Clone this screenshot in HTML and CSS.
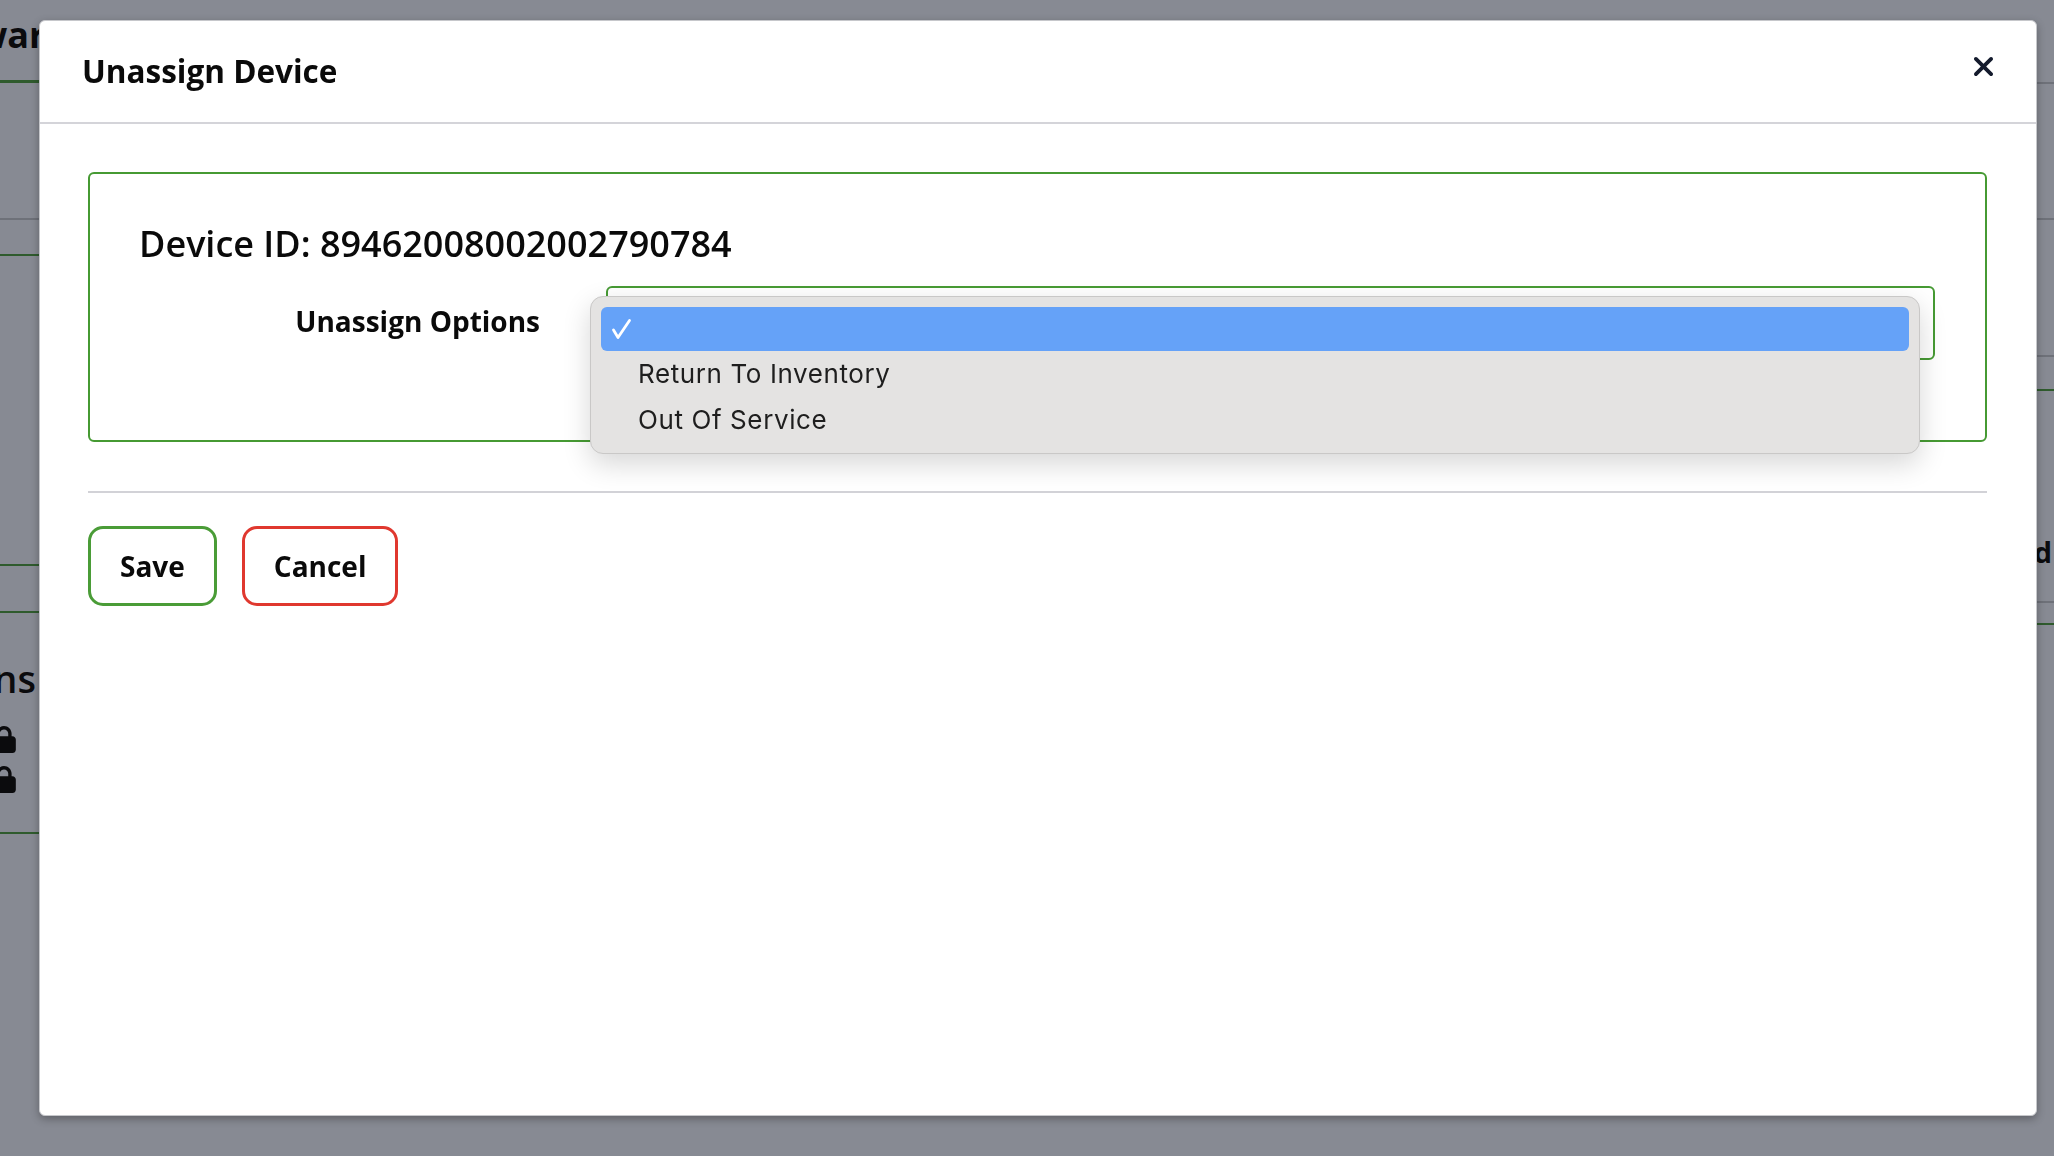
FILE: index.html
```html
<!DOCTYPE html>
<html lang="en">
<head>
  <meta charset="UTF-8" />
  <title>Unassign Device</title>
  <link rel="stylesheet" href="styles.css">
</head>
<body>

  <!-- page behind the overlay -->
  <div class="page">
    <div class="side side-left">
      <div class="bg-title"><span>Hardware</span></div>
      <div class="bg-row row-a"></div>
      <div class="bg-row row-b"></div>
      <div class="bg-row row-c"></div>
      <div class="bg-row row-d"></div>
      <div class="bg-perms">
        <h3>Permissions</h3>
        <svg class="lock" viewBox="0 0 448 512"><path d="M144 144v48h160v-48c0-44.2-35.8-80-80-80s-80 35.8-80 80zM80 192v-48C80 64.5 144.5 0 224 0s144 64.5 144 144v48h16c35.3 0 64 28.7 64 64v192c0 35.3-28.7 64-64 64H64c-35.3 0-64-28.7-64-64V256c0-35.3 28.7-64 64-64h16z"/></svg>
        <svg class="lock" viewBox="0 0 448 512"><path d="M144 144v48h160v-48c0-44.2-35.8-80-80-80s-80 35.8-80 80zM80 192v-48C80 64.5 144.5 0 224 0s144 64.5 144 144v48h16c35.3 0 64 28.7 64 64v192c0 35.3-28.7 64-64 64H64c-35.3 0-64-28.7-64-64V256c0-35.3 28.7-64 64-64h16z"/></svg>
      </div>
    </div>
    <div class="side side-right">
      <div class="bg-row r1"></div>
      <div class="bg-row r2"></div>
      <div class="bg-row r3"></div>
      <div class="bg-row r4 green"></div>
      <div class="bg-row r5"><span>Assigned</span></div>
      <div class="bg-row r6 green"></div>
    </div>
  </div>

  <!-- modal -->
  <div class="modal">
    <div class="modal-header">
      <h2>Unassign Device</h2>
      <button class="close-btn" aria-label="Close">
        <svg viewBox="32 96 320 320"><path d="M342.6 150.6c12.5-12.5 12.5-32.8 0-45.3s-32.8-12.5-45.3 0L192 210.7 86.6 105.4c-12.5-12.5-32.8-12.5-45.3 0s-12.5 32.8 0 45.3L146.7 256 41.4 361.4c-12.5 12.5-12.5 32.8 0 45.3s32.8 12.5 45.3 0L192 301.3 297.4 406.6c12.5 12.5 32.8 12.5 45.3 0s12.5-32.8 0-45.3L237.3 256 342.6 150.6z"/></svg>
      </button>
    </div>

    <div class="modal-body">
      <div class="device-box">
        <p class="device-id">Device ID: 89462008002002790784</p>
        <div class="form-row">
          <label for="unassign-option">Unassign Options</label>
          <div class="select-wrap">
            <div class="select-box" id="unassign-option"></div>

            <!-- open native menu -->
            <ul class="select-menu">
              <li class="selected">
                <svg class="check" viewBox="0 0 22 22"><path d="M3.5 12 L8 19.5 L19.5 2.5"/></svg>
              </li>
              <li>Return To Inventory</li>
              <li>Out Of Service</li>
            </ul>
          </div>
        </div>
      </div>

      <hr class="divider">

      <div class="actions">
        <button class="btn btn-save">Save</button>
        <button class="btn btn-cancel">Cancel</button>
      </div>
    </div>
  </div>

</body>
</html>
```

FILE: styles.css
```css
body {
  margin: 0;
  height: 100vh;
  overflow: hidden;
  background-color: #878a93;
  font-family: "Open Sans", "Noto Sans", sans-serif;
  color: #0b0b0d;
}

/* Background page (dimmed) */
.page {
  display: flex;
  justify-content: space-between;
}

.side {
  width: 200px;
}

.bg-title {
  height: 80px;
  border-bottom: 3px solid #2f5b2d;
  font-size: 36px;
  font-weight: 700;
  line-height: 70px;
  white-space: nowrap;
}

.bg-title span {
  margin-left: -112px;
}

.bg-row {
  border-bottom: 2px solid #6e7179;
}

.bg-row.green { border-bottom-color: #2f5b2d; }

.row-a { height: 135px; }
.row-b { height: 34px; border-bottom-color: #2f5b2d; }
.row-c { height: 308px; border-bottom-color: #2f5b2d; }
.row-d { height: 45px; border-bottom-color: #2f5b2d; }

.bg-perms {
  padding: 47px 0 39px;
  border-bottom: 2px solid #2f5b2d;
}

.bg-perms h3 {
  margin: 0 0 30px -186px;
  font-size: 38px;
  font-weight: 600;
  line-height: 36px;
  white-space: nowrap;
}

.lock {
  display: block;
  width: 24px;
  height: 27px;
  margin-left: -8px;
  fill: #0b0b0d;
}

.lock + .lock { margin-top: 13px; }

.side-right .r1 { height: 82px; }
.side-right .r2 { height: 134px; }
.side-right .r3 { height: 135px; }
.side-right .r4 { height: 32px; }
.side-right .r5 {
  height: 212px;
  box-sizing: border-box;
  padding-top: 140px;
  text-align: right;
  font-size: 29px;
  font-weight: 700;
  line-height: 42px;
}
.side-right .r5 span { margin-right: 2px; }
.side-right .r6 { height: 20px; }

/* Modal */
.modal {
  position: fixed;
  top: 20px;
  left: 39px;
  width: 1998px;
  height: 1096px;
  box-sizing: border-box;
  background: #fff;
  border: 1px solid #c6c7cb;
  border-radius: 6px;
  box-shadow: 0 3px 8px rgba(0, 0, 0, 0.3);
}

.modal-header {
  display: flex;
  justify-content: space-between;
  align-items: flex-start;
  padding: 31px 43px 32px 42px;
  border-bottom: 2px solid #d4d4d9;
}

.modal-header h2 {
  margin: 0;
  font-size: 31.5px;
  font-weight: 700;
  line-height: 38px;
  color: #0a0a0a;
}

.close-btn {
  margin-top: 5px;
  padding: 0;
  border: none;
  background: none;
  width: 19px;
  height: 19px;
  cursor: pointer;
}

.close-btn svg {
  display: block;
  width: 19px;
  height: 19px;
  fill: #141b2d;
}

.modal-body {
  padding: 48px 49px 0 48px;
}

.device-box {
  border: 2px solid #469a33;
  border-radius: 6px;
  padding: 48px 50px 80px 49px;
}

.device-id {
  margin: 0 0 20px;
  font-size: 36px;
  font-weight: 600;
  line-height: 44px;
  color: #0a0a0a;
}

.form-row {
  display: flex;
  align-items: center;
  gap: 66px;
}

.form-row label {
  width: 401px;
  padding-bottom: 5px;
  text-align: right;
  font-size: 28px;
  font-weight: 700;
  color: #0a0a0a;
}

.select-wrap {
  flex: 1;
  position: relative;
}

.select-box {
  height: 74px;
  box-sizing: border-box;
  border: 2px solid #469a33;
  border-radius: 6px;
}

/* macOS style open menu */
.select-menu {
  position: absolute;
  top: 10px;
  left: -16px;
  width: 1330px;
  box-sizing: border-box;
  margin: 0;
  padding: 10px;
  list-style: none;
  background: #e4e3e2;
  border: 1px solid #c9c8c7;
  border-radius: 13px;
  box-shadow: 0 10px 28px rgba(0, 0, 0, 0.16);
  font-family: Inter, "Liberation Sans", sans-serif;
  font-size: 26px;
  letter-spacing: 0.6px;
  color: #1e1e1e;
}

.select-menu li {
  height: 46px;
  line-height: 46px;
  padding-left: 37px;
}

.select-menu li.selected {
  height: 44px;
  background: #65a2f8;
  border-radius: 6px;
  position: relative;
}

.check {
  position: absolute;
  left: 9px;
  top: 11px;
  width: 22px;
  height: 22px;
  fill: none;
  stroke: #fff;
  stroke-width: 2.8;
  stroke-linecap: round;
  stroke-linejoin: round;
}

.divider {
  margin: 49px 0 0;
  border: none;
  border-top: 2px solid #d2d2d7;
}

.actions {
  display: flex;
  gap: 25px;
  margin-top: 33px;
}

.btn {
  height: 80px;
  padding: 0 29px;
  background: #fff;
  border: 3px solid;
  border-radius: 15px;
  font-family: "Open Sans", sans-serif;
  font-size: 28px;
  font-weight: 700;
  color: #0a0a0a;
  cursor: pointer;
}

.btn-save { border-color: #4a9c37; }
.btn-cancel { border-color: #e0382f; }
```
